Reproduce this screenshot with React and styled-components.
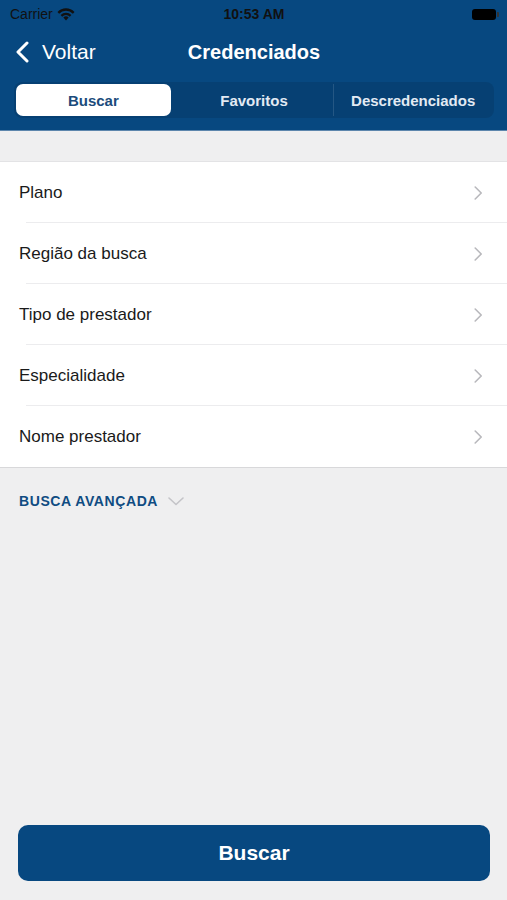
import styled, { createGlobalStyle } from "styled-components";

const GlobalStyle = createGlobalStyle`
  html, body {
    margin: 0;
    padding: 0;
    background: #efeff0;
    font-family: "Liberation Sans", Arial, sans-serif;
  }
`;

const Screen = styled.div`
  display: flex;
  flex-direction: column;
  width: 507px;
  height: 900px;
  background: #efeff0;
  overflow: hidden;
`;

const Header = styled.header`
  background: #074880;
  color: white;
  border-bottom: 1px solid #5d86ad;
`;

const StatusBar = styled.div`
  display: grid;
  grid-template-columns: 1fr auto 1fr;
  align-items: center;
  height: 28px;
  padding: 0 9px 0 10px;
  font-size: 14px;
  color: #111;
`;

const Carrier = styled.div`
  display: flex;
  align-items: center;
  gap: 4px;
`;

const Clock = styled.div`
  font-weight: bold;
  font-size: 14px;
`;

const Battery = styled.div`
  justify-self: end;
  width: 24px;
  height: 11px;
  border-radius: 3px;
  background: #000;
  margin-right: 2px;
  position: relative;
  &::after {
    content: "";
    position: absolute;
    right: -3px;
    top: 3px;
    width: 2px;
    height: 5px;
    border-radius: 0 1px 1px 0;
    background: #333;
  }
`;

const NavBar = styled.div`
  display: grid;
  grid-template-columns: 1fr auto 1fr;
  align-items: center;
  height: 48px;
  padding: 0 15px 0 16px;
`;

const Back = styled.div`
  display: flex;
  align-items: center;
  gap: 13px;
  font-size: 21px;
`;

const Title = styled.div`
  font-size: 20px;
  font-weight: bold;
`;

const SegmentWrap = styled.div`
  padding: 6px 13px 12px 14px;
`;

const Segments = styled.div`
  display: grid;
  grid-template-columns: 1fr 1fr 1fr;
  height: 36px;
  padding: 2px;
  border-radius: 8px;
  background: rgba(0, 0, 0, 0.1);
  box-sizing: border-box;
`;

const Segment = styled.div`
  display: flex;
  align-items: center;
  justify-content: center;
  font-size: 15px;
  font-weight: bold;
  color: ${(p) => (p.$active ? "#1b4b7b" : "#e2eaf3")};
  background: ${(p) => (p.$active ? "#fff" : "transparent")};
  margin-right: ${(p) => (p.$active ? "4px" : "0")};
  border-left: ${(p) => (p.$divider ? "1px solid rgba(255,255,255,0.12)" : "none")};
  border-radius: ${(p) => (p.$divider ? "0" : "7px")};
`;

const Spacer = styled.div`
  height: 30px;
`;

const List = styled.div`
  background: #fff;
  border-top: 1px solid #e3e3e5;
  border-bottom: 1px solid #d8d8da;
`;

const Row = styled.div`
  display: flex;
  align-items: center;
  justify-content: space-between;
  height: 61px;
  padding: 0 25px 0 19px;
  font-size: 17px;
  color: #1a1a1a;
  position: relative;
  &:not(:last-child)::after {
    content: "";
    position: absolute;
    left: 26px;
    right: 0;
    bottom: 0;
    height: 1px;
    background: #ececee;
  }
`;

const Advanced = styled.div`
  display: flex;
  align-items: center;
  gap: 10px;
  padding: 25px 19px;
  font-size: 14px;
  font-weight: bold;
  color: #0f4c82;
  letter-spacing: 0.6px;
`;

const Fill = styled.div`
  flex: 1;
`;

const Footer = styled.div`
  padding: 0 17px 19px 18px;
`;

const Button = styled.button`
  width: 100%;
  height: 56px;
  border: none;
  border-radius: 10px;
  background: #074880;
  color: #fff;
  font-family: "Liberation Sans", Arial, sans-serif;
  font-size: 21px;
  font-weight: bold;
`;

const Chevron = ({ color = "#b8b8bc", size = 14 }) => (
  <svg width={size * 0.6} height={size} viewBox="0 0 8 14" fill="none">
    <path d="M1 1l6 6-6 6" stroke={color} strokeWidth="1.6" strokeLinecap="round" strokeLinejoin="round" />
  </svg>
);

const Wifi = () => (
  <svg width="18" height="13" viewBox="0 0 18 13">
    <path d="M9 12.5l2.6-3a3.6 3.6 0 0 0-5.2 0z" fill="#111" />
    <path d="M3.6 6.9a7.6 7.6 0 0 1 10.8 0l-1.6 1.8a5.2 5.2 0 0 0-7.6 0z" fill="#111" />
    <path d="M0.5 3.9a12 12 0 0 1 17 0l-1.6 1.8a9.6 9.6 0 0 0-13.8 0z" fill="#111" />
  </svg>
);

const items = ["Plano", "Região da busca", "Tipo de prestador", "Especialidade", "Nome prestador"];

export default function App() {
  return (
    <Screen>
      <GlobalStyle />
      <Header>
        <StatusBar>
          <Carrier>
            Carrier <Wifi />
          </Carrier>
          <Clock>10:53 AM</Clock>
          <Battery />
        </StatusBar>
        <NavBar>
          <Back>
            <svg width="13" height="22" viewBox="0 0 13 22" fill="none">
              <path d="M11 2L2 11l9 9" stroke="#fff" strokeWidth="3" strokeLinecap="round" strokeLinejoin="round" />
            </svg>
            Voltar
          </Back>
          <Title>Credenciados</Title>
          <div />
        </NavBar>
        <SegmentWrap>
          <Segments>
            <Segment $active>Buscar</Segment>
            <Segment>Favoritos</Segment>
            <Segment $divider>Descredenciados</Segment>
          </Segments>
        </SegmentWrap>
      </Header>
      <Spacer />
      <List>
        {items.map((t) => (
          <Row key={t}>
            {t}
            <Chevron />
          </Row>
        ))}
      </List>
      <Advanced>
        BUSCA AVANÇADA
        <svg width="16" height="9" viewBox="0 0 16 9" fill="none">
          <path d="M1 1l7 6.5L15 1" stroke="#c4c4c8" strokeWidth="1.6" strokeLinecap="round" strokeLinejoin="round" />
        </svg>
      </Advanced>
      <Fill />
      <Footer>
        <Button>Buscar</Button>
      </Footer>
    </Screen>
  );
}
